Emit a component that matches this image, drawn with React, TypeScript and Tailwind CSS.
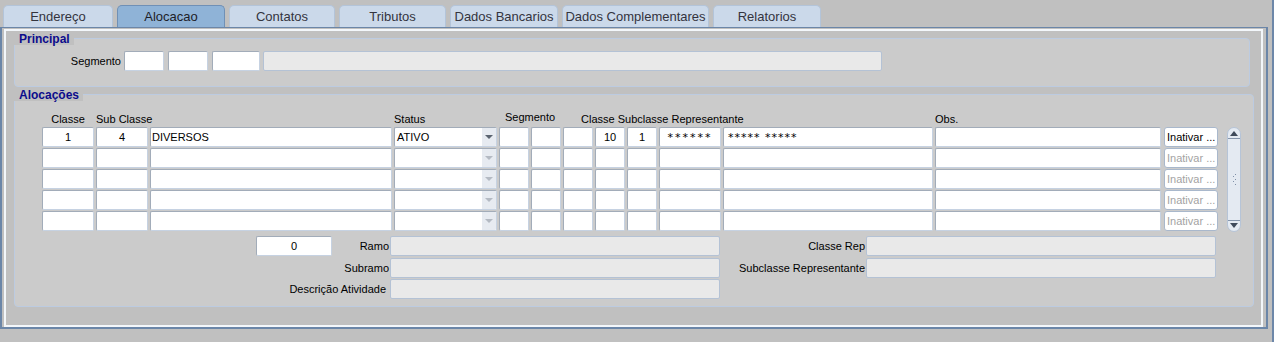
import React from "react";

const cell =
  "h-[20px] shrink-0 bg-white border border-[#a2acb9] border-r-[#c6d2e2] border-b-[#c6d2e2] rounded-[2px] text-[11px] leading-[18px] text-black overflow-hidden whitespace-nowrap";
const disabledCell =
  "h-[20px] shrink-0 bg-[#e9e9e9] border border-[#b4c2d5] rounded-[2px]";

const tabs = [
  { label: "Endereço", w: "w-[110px]" },
  { label: "Alocacao", w: "w-[108px]", active: true },
  { label: "Contatos", w: "w-[106px]" },
  { label: "Tributos", w: "w-[107px]" },
  { label: "Dados Bancarios", w: "w-[108px]" },
  { label: "Dados Complementares", w: "w-[147px]" },
  { label: "Relatorios", w: "w-[108px]" },
];

interface RowData {
  classe: string;
  sub: string;
  desc: string;
  status: string;
  cls: string;
  subcls: string;
  rep: string;
  repName: string;
  enabled: boolean;
}

const rows: RowData[] = [
  { classe: "1", sub: "4", desc: "DIVERSOS", status: "ATIVO", cls: "10", subcls: "1", rep: "******", repName: "***** *****", enabled: true },
  { classe: "", sub: "", desc: "", status: "", cls: "", subcls: "", rep: "", repName: "", enabled: false },
  { classe: "", sub: "", desc: "", status: "", cls: "", subcls: "", rep: "", repName: "", enabled: false },
  { classe: "", sub: "", desc: "", status: "", cls: "", subcls: "", rep: "", repName: "", enabled: false },
  { classe: "", sub: "", desc: "", status: "", cls: "", subcls: "", rep: "", repName: "", enabled: false },
];

function Group({ title, className, children }: { title: string; className: string; children: React.ReactNode }) {
  return (
    <div className={`relative bg-[#cbcbcb] border border-[#bccbe1] rounded-[4px] ${className}`}>
      <div className="absolute -top-[6px] -left-[1px] h-[12px] bg-[#c0c0c0] pl-[5px] pr-[4px] font-bold text-[12px] leading-[12px] text-[#0c0c8c]">
        {title}
      </div>
      {children}
    </div>
  );
}

function StatusSelect({ value, enabled }: { value: string; enabled: boolean }) {
  return (
    <div className={`${cell} w-[103px] flex`}>
      <div className="flex-1 pl-[2px]">{value}</div>
      <div className="w-[14px] h-full bg-[#e7ebf1] flex items-center justify-center">
        <svg width="8" height="5" viewBox="0 0 8 5">
          <polygon points="0,0 8,0 4,4" fill={enabled ? "#5b6470" : "#b4bac3"} />
        </svg>
      </div>
    </div>
  );
}

function Row({ r }: { r: RowData }) {
  return (
    <div className="flex gap-[2px]">
      <div className={`${cell} w-[52px] text-center`}>{r.classe}</div>
      <div className={`${cell} w-[52px] text-center`}>{r.sub}</div>
      <div className={`${cell} w-[242px] pl-[1px]`}>{r.desc}</div>
      <StatusSelect value={r.status} enabled={r.enabled} />
      <div className={`${cell} w-[30px]`} />
      <div className={`${cell} w-[30px]`} />
      <div className={`${cell} w-[30px]`} />
      <div className={`${cell} w-[30px] text-center`}>{r.cls}</div>
      <div className={`${cell} w-[30px] text-center`}>{r.subcls}</div>
      <div className={`${cell} w-[62px] text-center text-[#444] font-['DejaVu_Sans',sans-serif] text-[11px] tracking-[2px] leading-[20px]`}>
        {r.rep}
      </div>
      <div className={`${cell} w-[210px] pl-[4px] text-[#444] font-['DejaVu_Sans',sans-serif] text-[11px] tracking-[1px] leading-[20px]`}>
        {r.repName}
      </div>
      <div className={`${cell} w-[226px]`} />
      <div
        className={`ml-[1px] h-[20px] w-[54px] shrink-0 bg-white border border-[#a9b8cc] rounded-[3px] pl-[2px] text-[11px] leading-[18px] whitespace-nowrap ${
          r.enabled ? "text-black" : "text-[#a3a3a3]"
        }`}
      >
        Inativar ...
      </div>
    </div>
  );
}

function Scrollbar() {
  return (
    <div className="w-[14px] h-[105px] bg-[#e4eaf2] border border-[#b6c4d7] rounded-[7px] flex flex-col items-center justify-between py-[3px]">
      <div className="flex flex-col items-center">
        <svg width="8" height="5" viewBox="0 0 8 5">
          <polygon points="0,5 8,5 4,0" fill="#3f4a5a" />
        </svg>
        <div className="mt-[2px] w-[12px] h-[1px] bg-[#8595ab]" />
      </div>
      <svg width="8" height="14" viewBox="0 0 8 14">
        <rect x="5" y="1" width="1" height="1" fill="#8090a8" />
        <rect x="3" y="3" width="1" height="1" fill="#8090a8" />
        <rect x="5" y="6" width="1" height="1" fill="#8090a8" />
        <rect x="3" y="8" width="1" height="1" fill="#8090a8" />
        <rect x="5" y="11" width="1" height="1" fill="#8090a8" />
      </svg>
      <div className="flex flex-col items-center">
        <div className="mb-[2px] w-[12px] h-[1px] bg-[#8595ab]" />
        <svg width="8" height="5" viewBox="0 0 8 5">
          <polygon points="0,0 8,0 4,5" fill="#3f4a5a" />
        </svg>
      </div>
    </div>
  );
}

export default function App() {
  return (
    <div className="w-[1274px] h-[342px] bg-[#c0c0c0] border-r-2 border-[#6d87a9] font-['Liberation_Sans',Arial,sans-serif] overflow-hidden">
      {/* tab strip */}
      <div className="flex gap-[4px] pl-[3px] pt-[5px] h-[27px]">
        {tabs.map((t) => (
          <div
            key={t.label}
            className={`${t.w} h-[22px] rounded-t-[5px] border border-b-0 text-center text-[13px] leading-[22px] ${
              t.active ? "bg-[#8fb3d7] border-[#6f90b6] text-[#1e1e28]" : "bg-[#cbd9ea] border-[#b3c4d9] text-[#34343e]"
            }`}
          >
            {t.label}
          </div>
        ))}
      </div>

      {/* frame */}
      <div className="w-[1268px] h-[302px] border-t border-l-2 border-r-2 border-b-2 border-[#6b86a8] pt-[1px] pl-[2px] pr-[3px]">
        <div className="h-full border-t-2 border-l-2 border-r-2 border-b-2 border-[#f3f7fb] pt-[7px] pl-[8px] pr-[7px]">
          <Group title="Principal" className="mr-[4px] h-[49px] pt-[12px]">
            <div className="flex items-center">
              <div className="w-[106px] text-right text-[11px] leading-[20px] text-black">Segmento</div>
              <div className={`${cell} ml-[3px] w-[40px]`} />
              <div className={`${cell} ml-[4px] w-[40px]`} />
              <div className={`${cell} ml-[4px] w-[48px]`} />
              <div className={`${disabledCell} ml-[3px] w-[619px]`} />
            </div>
          </Group>

          <Group title="Alocações" className="mt-[7px] h-[213px] pt-[18px] pl-[27px]">
            {/* headers */}
            <div className="flex gap-[2px] h-[13px] text-[11px] leading-[13px] text-black whitespace-nowrap">
              <div className="w-[52px] text-center">Classe</div>
              <div className="w-[52px]">Sub Classe</div>
              <div className="w-[242px]" />
              <div className="w-[103px]">Status</div>
              <div className="w-[62px] text-center -mt-[2px]">Segmento</div>
              <div className="w-[370px] pl-[18px]">Classe Subclasse Representante</div>
              <div className="w-[226px]">Obs.</div>
            </div>

            <div className="flex items-start mt-[1px]">
              <div className="flex flex-col gap-[1px]">
                {rows.map((r, i) => (
                  <Row key={i} r={r} />
                ))}
              </div>
              <div className="ml-[9px]">
                <Scrollbar />
              </div>
            </div>

            {/* details */}
            <div className="flex mt-[4px] ml-[214px] text-[11px] text-black">
              <div className="flex flex-col gap-[1px]">
                <div className="flex items-center h-[20px]">
                  <div className={`${cell} w-[76px] text-center bg-[#f6f6f6]`}>0</div>
                  <div className="w-[58px] text-right pr-[1px]">Ramo</div>
                  <div className={`${disabledCell} w-[330px]`} />
                </div>
                <div className="flex items-center h-[20px] mt-[1px]">
                  <div className="w-[134px] text-right pr-[1px]">Subramo</div>
                  <div className={`${disabledCell} w-[330px]`} />
                </div>
                <div className="flex items-center h-[20px]">
                  <div className="w-[134px] text-right pr-[4px]">Descrição Atividade</div>
                  <div className={`${disabledCell} w-[330px]`} />
                </div>
              </div>
              <div className="flex flex-col gap-[1px]">
                <div className="flex items-center h-[20px]">
                  <div className="w-[146px] text-right pr-[1px]">Classe Rep</div>
                  <div className={`${disabledCell} w-[350px]`} />
                </div>
                <div className="flex items-center h-[20px] mt-[1px]">
                  <div className="w-[146px] text-right pr-[1px] whitespace-nowrap">Subclasse Representante</div>
                  <div className={`${disabledCell} w-[350px]`} />
                </div>
              </div>
            </div>
          </Group>
        </div>
      </div>
    </div>
  );
}
